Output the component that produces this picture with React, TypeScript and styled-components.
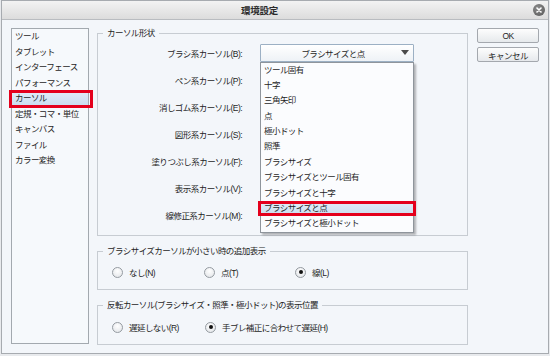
import React from "react";
import styled, { createGlobalStyle } from "styled-components";

const Global = createGlobalStyle`
  html, body { margin: 0; padding: 0; background: #e8eaed; }
  body {
    font-family: "Liberation Sans", "Noto Sans CJK JP", sans-serif;
    font-size: 8.5px;
    letter-spacing: -0.55px;
    color: #1e1e1e;
  }
  * { box-sizing: border-box; }
`;

const Window = styled.div`
  width: 548px;
  height: 354px;
  margin: 0 1px;
  border: 1px solid #a7abb0;
  background: #f3f6fa;
  display: flex;
  flex-direction: column;
`;

const TitleBar = styled.div`
  height: 19px;
  flex: none;
  display: flex;
  align-items: center;
  background: linear-gradient(#f3f3f3, #dcdcdc);
  border-bottom: 1px solid #b9bcc0;
  padding-right: 3px;
`;

const Title = styled.div`
  flex: 1;
  text-align: center;
  padding-right: 16px;
  font-size: 9.5px;
  font-weight: bold;
  letter-spacing: -0.3px;
  color: #2a2a2a;
`;

const CloseButton = styled.div`
  width: 12px;
  height: 12px;
  border-radius: 50%;
  background: radial-gradient(circle at 40% 35%, #8d8d8d, #555);
  display: flex;
  align-items: center;
  justify-content: center;
`;

const Body = styled.div`
  flex: 1;
  display: flex;
  align-items: flex-start;
  padding: 8px 9px 0 9px;
`;

const Sidebar = styled.ul`
  list-style: none;
  margin: 0 8px 0 0;
  padding: 0;
  width: 78px;
  height: 316px;
  flex: none;
  border: 1px solid #a3a9af;
  background: #f6f9fc;
`;

const SideItem = styled.li<{ $active?: boolean }>`
  position: relative;
  height: 15.5px;
  line-height: 15.5px;
  padding-left: 3px;
  white-space: nowrap;
  background: ${(p) => (p.$active ? "linear-gradient(#e3edf8, #c8dbee)" : "transparent")};
  &::after {
    content: "";
    display: ${(p) => (p.$active ? "block" : "none")};
    position: absolute;
    inset: -1px -5px -1px -3px;
    border: 3px solid #e4001c;
  }
`;

const Main = styled.div`
  width: 371px;
  flex: none;
  display: flex;
  flex-direction: column;
  gap: 10px;
`;

const Group = styled.fieldset`
  margin: 0;
  padding: 0;
  border: 1px solid #c7ccd2;
  min-width: 0;
`;

const Legend = styled.legend`
  margin-left: 5px;
  padding: 0 4px;
  line-height: 10px;
  height: 10px;
  white-space: nowrap;
`;

const FormGrid = styled.div`
  display: grid;
  grid-template-columns: 145px 154px;
  column-gap: 17px;
  grid-auto-rows: 27px;
  align-items: center;
  padding: 1px 0 7px 0;
`;

const FieldLabel = styled.div`
  text-align: right;
  padding-right: 1px;
  white-space: nowrap;
`;

const SelectWrap = styled.div`
  position: relative;
`;

const SelectBox = styled.div`
  height: 18px;
  border: 1px solid #9cb0c4;
  border-radius: 1px;
  background: linear-gradient(#ffffff, #eef2f6);
  display: flex;
  align-items: center;
  padding: 0 4px 0 0;
`;

const SelectText = styled.div`
  flex: 1;
  text-align: center;
  padding-left: 4px;
`;

const Dropdown = styled.ul`
  position: absolute;
  z-index: 2;
  top: 100%;
  left: 0;
  width: 100%;
  margin: 0;
  padding: 0;
  list-style: none;
  border: 1px solid #8f959c;
  background: #fbfcfe;
  box-shadow: 2px 2px 2px rgba(0, 0, 0, 0.28);
`;

const Option = styled.li<{ $active?: boolean }>`
  position: relative;
  height: 15.4px;
  line-height: 15.4px;
  padding-left: 3px;
  white-space: nowrap;
  background: ${(p) => (p.$active ? "linear-gradient(#e4eef8, #c9dcee)" : "transparent")};
  &::after {
    content: "";
    display: ${(p) => (p.$active ? "block" : "none")};
    position: absolute;
    inset: 0 -3px 0 -3px;
    border: 3px solid #e4001c;
  }
`;

const RadioRow = styled.div<{ $pt: number }>`
  display: flex;
  align-items: center;
  height: 20px;
  padding: ${(p) => p.$pt}px 0 0 14px;
  box-sizing: content-box;
  margin-bottom: 7px;
`;

const RadioLabel = styled.label<{ $w?: number }>`
  display: flex;
  align-items: center;
  gap: 6px;
  width: ${(p) => (p.$w ? `${p.$w}px` : "auto")};
  white-space: nowrap;
`;

const RadioCircle = styled.span<{ $on?: boolean }>`
  width: 11px;
  height: 11px;
  border-radius: 50%;
  border: 1px solid #959ba1;
  background: radial-gradient(circle at 50% 35%, #ffffff, #dfe2e6);
  display: flex;
  align-items: center;
  justify-content: center;
  &::after {
    content: "";
    display: ${(p) => (p.$on ? "block" : "none")};
    width: 4px;
    height: 4px;
    border-radius: 50%;
    background: #111;
  }
`;

const Buttons = styled.div`
  width: 62px;
  flex: none;
  margin-left: 9px;
  display: flex;
  flex-direction: column;
  gap: 4px;
`;

const Button = styled.div`
  height: 15px;
  border: 1px solid #a4a8ae;
  border-radius: 2px;
  background: linear-gradient(#fdfdfd, #e6e9ec);
  display: flex;
  align-items: center;
  justify-content: center;
  white-space: nowrap;
`;

const sideItems = [
  "ツール",
  "タブレット",
  "インターフェース",
  "パフォーマンス",
  "カーソル",
  "定規・コマ・単位",
  "キャンバス",
  "ファイル",
  "カラー変換",
];

const fields = [
  "ブラシ系カーソル(B):",
  "ペン系カーソル(P):",
  "消しゴム系カーソル(E):",
  "図形系カーソル(S):",
  "塗りつぶし系カーソル(F):",
  "表示系カーソル(V):",
  "線修正系カーソル(M):",
];

const options = [
  "ツール固有",
  "十字",
  "三角矢印",
  "点",
  "極小ドット",
  "照準",
  "ブラシサイズ",
  "ブラシサイズとツール固有",
  "ブラシサイズと十字",
  "ブラシサイズと点",
  "ブラシサイズと極小ドット",
];

const Arrow = () => (
  <svg width="8" height="5" viewBox="0 0 8 5">
    <path d="M0 0 H8 L4 5 Z" fill="#4a4a4a" />
  </svg>
);

const CloseX = () => (
  <svg width="6" height="6" viewBox="0 0 6 6">
    <path d="M1 1 L5 5 M5 1 L1 5" stroke="#fff" strokeWidth="1.6" strokeLinecap="round" />
  </svg>
);

export default function App() {
  return (
    <>
      <Global />
      <Window>
        <TitleBar>
          <Title>環境設定</Title>
          <CloseButton>
            <CloseX />
          </CloseButton>
        </TitleBar>
        <Body>
          <Sidebar>
            {sideItems.map((s) => (
              <SideItem key={s} $active={s === "カーソル"}>
                {s}
              </SideItem>
            ))}
          </Sidebar>
          <Main>
            <Group>
              <Legend>カーソル形状</Legend>
              <FormGrid>
                {fields.map((f, i) => (
                  <React.Fragment key={f}>
                    <FieldLabel>{f}</FieldLabel>
                    {i === 0 ? (
                      <SelectWrap>
                        <SelectBox>
                          <SelectText>ブラシサイズと点</SelectText>
                          <Arrow />
                        </SelectBox>
                        <Dropdown>
                          {options.map((o) => (
                            <Option key={o} $active={o === "ブラシサイズと点"}>
                              {o}
                            </Option>
                          ))}
                        </Dropdown>
                      </SelectWrap>
                    ) : (
                      <SelectWrap />
                    )}
                  </React.Fragment>
                ))}
              </FormGrid>
            </Group>
            <Group>
              <Legend>ブラシサイズカーソルが小さい時の追加表示</Legend>
              <RadioRow $pt={6}>
                <RadioLabel $w={92}>
                  <RadioCircle />
                  なし(N)
                </RadioLabel>
                <RadioLabel $w={91}>
                  <RadioCircle />
                  点(T)
                </RadioLabel>
                <RadioLabel>
                  <RadioCircle $on />
                  線(L)
                </RadioLabel>
              </RadioRow>
            </Group>
            <Group>
              <Legend>反転カーソル(ブラシサイズ・照準・極小ドット)の表示位置</Legend>
              <RadioRow $pt={7}>
                <RadioLabel $w={93}>
                  <RadioCircle />
                  遅延しない(R)
                </RadioLabel>
                <RadioLabel>
                  <RadioCircle $on />
                  手ブレ補正に合わせて遅延(H)
                </RadioLabel>
              </RadioRow>
            </Group>
          </Main>
          <Buttons>
            <Button>OK</Button>
            <Button>キャンセル</Button>
          </Buttons>
        </Body>
      </Window>
    </>
  );
}
